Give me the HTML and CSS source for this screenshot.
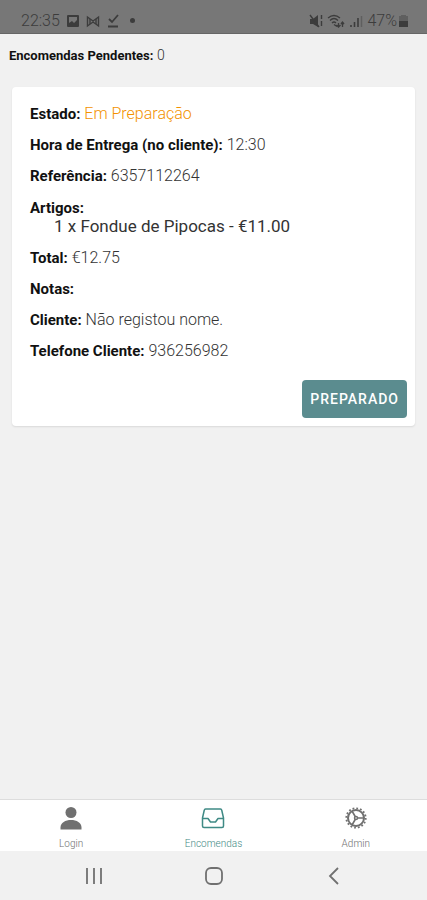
FILE: index.html
```html
<!DOCTYPE html>
<html lang="pt">
<head>
    <meta charset="UTF-8">
    <meta name="viewport" content="width=device-width, initial-scale=1.0">
    <title>Encomendas</title>
    <link rel="stylesheet" href="styles.css">
</head>
<body>
    <header class="statusbar">
        <div class="status-group">
            <span class="clock">22:35</span>
            <svg class="status-icon" viewBox="0 0 14 14">
                <path fill="currentColor" fill-rule="evenodd" d="M2 1h10q1 0 1 1v10q0 1-1 1H2q-1 0-1-1V2q0-1 1-1zM3 3v6l3-2 2 2 3-3V3z"/>
            </svg>
            <svg class="status-icon" viewBox="0 0 14 14" fill="none" stroke="currentColor">
                <path stroke-width="1.4" d="M1.500 12V3L7 7l5.500-4v9L7 8z"/>
                <path stroke-width="1.4" d="M4 5v5M10 5v5"/>
            </svg>
            <svg class="status-icon" viewBox="0 0 14 14" fill="none" stroke="currentColor">
                <path stroke-width="1.8" d="M3 5l3 3 6-7M2 12.500h10"/>
            </svg>
            <span class="dot"></span>
        </div>
        <div class="status-group status-right">
            <svg class="status-icon" viewBox="0 0 14 14">
                <path fill="currentColor" d="M1 5h3l5-4v12L4 10H1z"/>
                <path fill="none" stroke="currentColor" stroke-width="1.4" d="M1 1l9 12M12.500 1v4M12.500 7v5"/>
            </svg>
            <svg class="status-icon wifi" viewBox="0 0 18 14" fill="none" stroke="currentColor">
                <path stroke-width="1.3" d="M1 4q6-5 12 0M3 6.500q4-4 8 0M5 9q2-2 4 0M7 10.500l3 2M11.500 9v4M9.500 11l2 2 2-2M15.500 13V8M14 10l1.500-2L17 10"/>
            </svg>
            <svg class="status-icon" viewBox="0 0 14 14" fill="none" stroke="currentColor">
                <path stroke-width="1.6" d="M2 11v2M5.500 8v5M9 4v9"/>
                <path stroke-width="1.4" opacity=".4" d="M12.500 2v11"/>
            </svg>
            <span class="battery-text">47%</span>
            <svg class="battery" viewBox="0 0 9 14">
                <path fill="currentColor" opacity=".4" d="M0 2h2V1h5v1h2v5H0z"/>
                <path fill="currentColor" d="M0 7h9v6H0z"/>
            </svg>
        </div>
    </header>

    <main class="content">
        <p class="pending"><b>Encomendas Pendentes:</b> 0</p>

        <section class="card">
            <p class="row"><b>Estado:</b> <span class="state">Em Preparação</span></p>
            <p class="row"><b>Hora de Entrega (no cliente):</b> 12:30</p>
            <p class="row"><b>Referência:</b> 6357112264</p>
            <div class="row articles">
                <b>Artigos:</b>
                <ul class="items">
                    <li>1 x Fondue de Pipocas - €11.00</li>
                </ul>
            </div>
            <p class="row"><b>Total:</b> €12.75</p>
            <p class="row"><b>Notas:</b></p>
            <p class="row"><b>Cliente:</b> Não registou nome.</p>
            <p class="row"><b>Telefone Cliente:</b> 936256982</p>
            <div class="actions">
                <button class="btn" type="button">PREPARADO</button>
            </div>
        </section>
    </main>

    <nav class="tabs">
        <a class="tab" href="#login">
            <svg class="tab-icon" viewBox="0 0 24 24" fill="currentColor">
                <circle cx="12" cy="6.500" r="5.500"/>
                <path d="M1.500 23.500v-2c0-5 5-7.500 10.500-7.500s10.500 2.500 10.500 7.500v2z"/>
            </svg>
            Login
        </a>
        <a class="tab active" href="#encomendas">
            <svg class="tab-icon" viewBox="0 0 24 24" fill="none" stroke="currentColor" stroke-width="1.500" stroke-linejoin="round">
                <path d="M4.500 3h15q1 0 1.200 1l1.800 8v8q0 1.500-1.500 1.500H3q-1.500 0-1.500-1.500v-8l1.800-8q.2-1 1.200-1zM1.500 12.500H7l2.500 3.500h5l2.500-3.500h5.500"/>
            </svg>
            Encomendas
        </a>
        <a class="tab" href="#admin">
            <svg class="tab-icon" viewBox="0 0 24 24" fill="none" stroke="currentColor">
                <circle cx="12" cy="12" r="8" stroke-width="2"/>
                <circle cx="12" cy="12" r="9.700" stroke-width="1.800" stroke-dasharray="1.800 2.010"/>
                <circle cx="12" cy="12" r="1.500" stroke-width="1.500"/>
                <path stroke-width="1.600" d="M13 12h7M11.500 11L8 5M11.500 13L8 19"/>
            </svg>
            Admin
        </a>
    </nav>

    <div class="sysbar">
        <button class="sys-btn" type="button" aria-label="Recentes">
            <svg class="sys-icon" viewBox="0 0 20 20" fill="none" stroke="currentColor" stroke-width="1.800">
                <path d="M3 2v16M10 2v16M17 2v16"/>
            </svg>
        </button>
        <button class="sys-btn" type="button" aria-label="Início">
            <svg class="sys-icon" viewBox="0 0 20 20" fill="none" stroke="currentColor" stroke-width="1.800">
                <rect x="2" y="2" width="16" height="16" rx="5"/>
            </svg>
        </button>
        <button class="sys-btn" type="button" aria-label="Voltar">
            <svg class="sys-icon" viewBox="0 0 20 20" fill="none" stroke="currentColor" stroke-width="1.800">
                <path d="M14 2l-8 8 8 8"/>
            </svg>
        </button>
    </div>
</body>
</html>
```
FILE: styles.css
```css
* {
    box-sizing: border-box;
}

body {
    margin: 0;
    min-height: 100vh;
    display: flex;
    flex-direction: column;
    background: #f1f1f1;
    color: #333;
    font-family: Roboto, "Liberation Sans", sans-serif;
    font-size: 16px;
    font-weight: 300;
    line-height: 18px;
}

p, ul {
    margin: 0;
    padding: 0;
}

b {
    color: #111;
    font-size: 15px;
    font-weight: bold;
}

/* top bar */
.statusbar {
    display: flex;
    justify-content: space-between;
    align-items: center;
    height: 34px;
    padding: 8px 19px 0 21px;
    background: #777;
    border-bottom: 1px solid #666;
    color: #3c3c3c;
}

.status-group {
    display: flex;
    align-items: center;
    gap: 6px;
}

.status-right {
    gap: 4px;
}

.status-icon {
    width: 14px;
    height: 14px;
}

.wifi {
    width: 18px;
}

.battery {
    width: 9px;
    height: 14px;
}

.battery-text {
    margin-right: -2px;
}

.dot {
    width: 5px;
    height: 5px;
    margin-left: 4px;
    border-radius: 50%;
    background: currentColor;
}

.content {
    flex: 1;
    padding: 12px;
}

.pending {
    margin-left: -3px;
    font-size: 14px;
}

.pending b {
    font-size: 13px;
}

/* order card */
.card {
    margin-top: 22px;
    padding: 18px 8px 8px 18px;
    background: #fff;
    border-radius: 4px;
    box-shadow: 0 1px 2px rgba(0, 0, 0, 0.1);
}

.row {
    margin-bottom: 13px;
}

.articles {
    padding: 1px 0;
}

.state {
    color: #f39200;
}

.items {
    padding-left: 24px;
    font-size: 17px;
    font-weight: 400;
    list-style: none;
}

.actions {
    display: flex;
    justify-content: flex-end;
    margin-top: 20px;
}

.btn {
    height: 38px;
    padding: 0 8px;
    border: 0;
    border-radius: 4px;
    background: #5b8c8f;
    color: #fff;
    font: 500 14px Roboto, "Liberation Sans", sans-serif;
    letter-spacing: 1px;
}

/* bottom tabs */
.tabs {
    display: flex;
    height: 52px;
    background: #fff;
    border-top: 1px solid #ddd;
}

.tab {
    flex: 1;
    display: flex;
    flex-direction: column;
    align-items: center;
    gap: 8px;
    padding-top: 6px;
    color: #707070;
    font-size: 10px;
    line-height: 12px;
    text-decoration: none;
}

.tab-icon {
    width: 24px;
    height: 24px;
}

.active {
    color: #3f8a85;
}

.sysbar {
    display: flex;
    justify-content: center;
    gap: 80px;
    height: 49px;
    padding-top: 4px;
}

.sys-btn {
    width: 40px;
    padding: 0;
    border: 0;
    background: none;
    color: #707070;
}

.sys-icon {
    width: 20px;
    height: 20px;
}
```
